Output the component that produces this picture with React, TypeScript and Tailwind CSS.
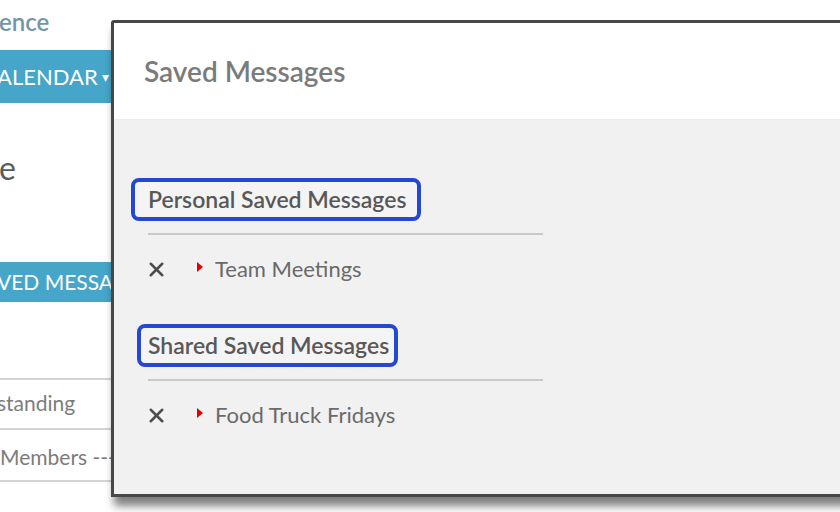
import React from 'react';
import { X } from 'lucide-react';

interface SavedItem {
    id: number;
    title: string;
}

interface SectionProps {
    heading: string;
    items: SavedItem[];
    boxClass: string;
}

const personal: SavedItem[] = [{ id: 1, title: 'Team Meetings' }];
const shared: SavedItem[] = [{ id: 2, title: 'Food Truck Fridays' }];

const Section: React.FC<SectionProps> = ({ heading, items, boxClass }) => (
    <div className="flex flex-col">
        {/* highlighted section heading */}
        <div className={`w-fit border-[4px] border-[#2548d2] rounded-[8px] bg-[#f4f4f4] h-[43px] flex items-center ${boxClass}`}>
            <span className="text-[23px] font-semibold text-[#585858] leading-none">{heading}</span>
        </div>
        <div className="ml-[34px] w-[395px] h-[2px] bg-[#c9c9c9] mt-[12px]"></div>
        {items.map(item => (
            <div key={item.id} className="flex items-center ml-[31px] h-[68px]">
                <X size={23} strokeWidth={2.6} className="text-[#4e4e4e]" />
                <svg width="6" height="10" viewBox="0 0 6 10" className="ml-[29px] -mt-[4px]">
                    <polygon points="0,0 6,5 0,10" fill="#e60000" />
                </svg>
                <span className="ml-[12px] text-[22px] text-[#6a6a6a] leading-none">{item.title}</span>
            </div>
        ))}
    </div>
);

const App: React.FC = () => {
    return (
        <div className="relative w-[840px] h-[512px] overflow-hidden bg-white" style={{ fontFamily: 'Lato, "Liberation Sans", sans-serif' }}>

            {/* Page underneath the dialog */}
            <div className="w-[112px] flex flex-col overflow-hidden">
                <div className="h-[44px] flex items-center text-[24px] font-semibold text-[#7396a8] whitespace-nowrap -ml-[1px]">ence</div>
                <div className="mt-[6px] h-[53px] bg-[#45a6c9] flex items-center text-[22px] text-white whitespace-nowrap -ml-[3px]">
                    ALENDAR <span className="ml-1 text-[14px]">▾</span>
                </div>
                <div className="h-[130px] flex items-center text-[32px] text-[#5a5a5a] whitespace-nowrap -ml-[1px]">e</div>
                <div className="mt-[29px] h-[40px] bg-[#45a6c9] flex items-center text-[21px] text-white whitespace-nowrap -ml-[3px]">
                    VED MESSAGES
                </div>
                <div className="mt-[76px] border-t-[2px] border-[#d4d4d4] h-[47px] flex items-center text-[21px] text-[#7c7c7c] whitespace-nowrap -ml-[3px]">standing</div>
                <div className="border-t-[2px] border-[#d4d4d4] mt-[3px]"></div>
                <div className="border-b-[2px] border-[#d4d4d4] h-[52px] pt-[4px] flex items-center text-[21px] text-[#7c7c7c] whitespace-nowrap">Members ---------</div>
            </div>

            {/* Saved Messages dialog */}
            <div className="absolute left-[111px] top-[20px] right-[-20px] bottom-[15px] border-[3px] border-[#474747] rounded-tl-[3px] bg-[#f1f1f1] flex flex-col shadow-[3px_9px_9px_rgba(0,0,0,0.5)]">
                <div className="h-[97px] bg-white flex items-center pl-[30px] border-b border-[#ececec]">
                    <h2 className="text-[28px] font-semibold text-[#7b7b7b] leading-none">Saved Messages</h2>
                </div>
                <div className="flex flex-col pt-[58px]">
                    <Section heading="Personal Saved Messages" items={personal} boxClass="ml-[17px] pl-[13px] pr-[11px]" />
                    <div className="mt-[21px]">
                        <Section heading="Shared Saved Messages" items={shared} boxClass="ml-[23px] pl-[7px] pr-[5px]" />
                    </div>
                </div>
            </div>
        </div>
    );
};

export default App;
